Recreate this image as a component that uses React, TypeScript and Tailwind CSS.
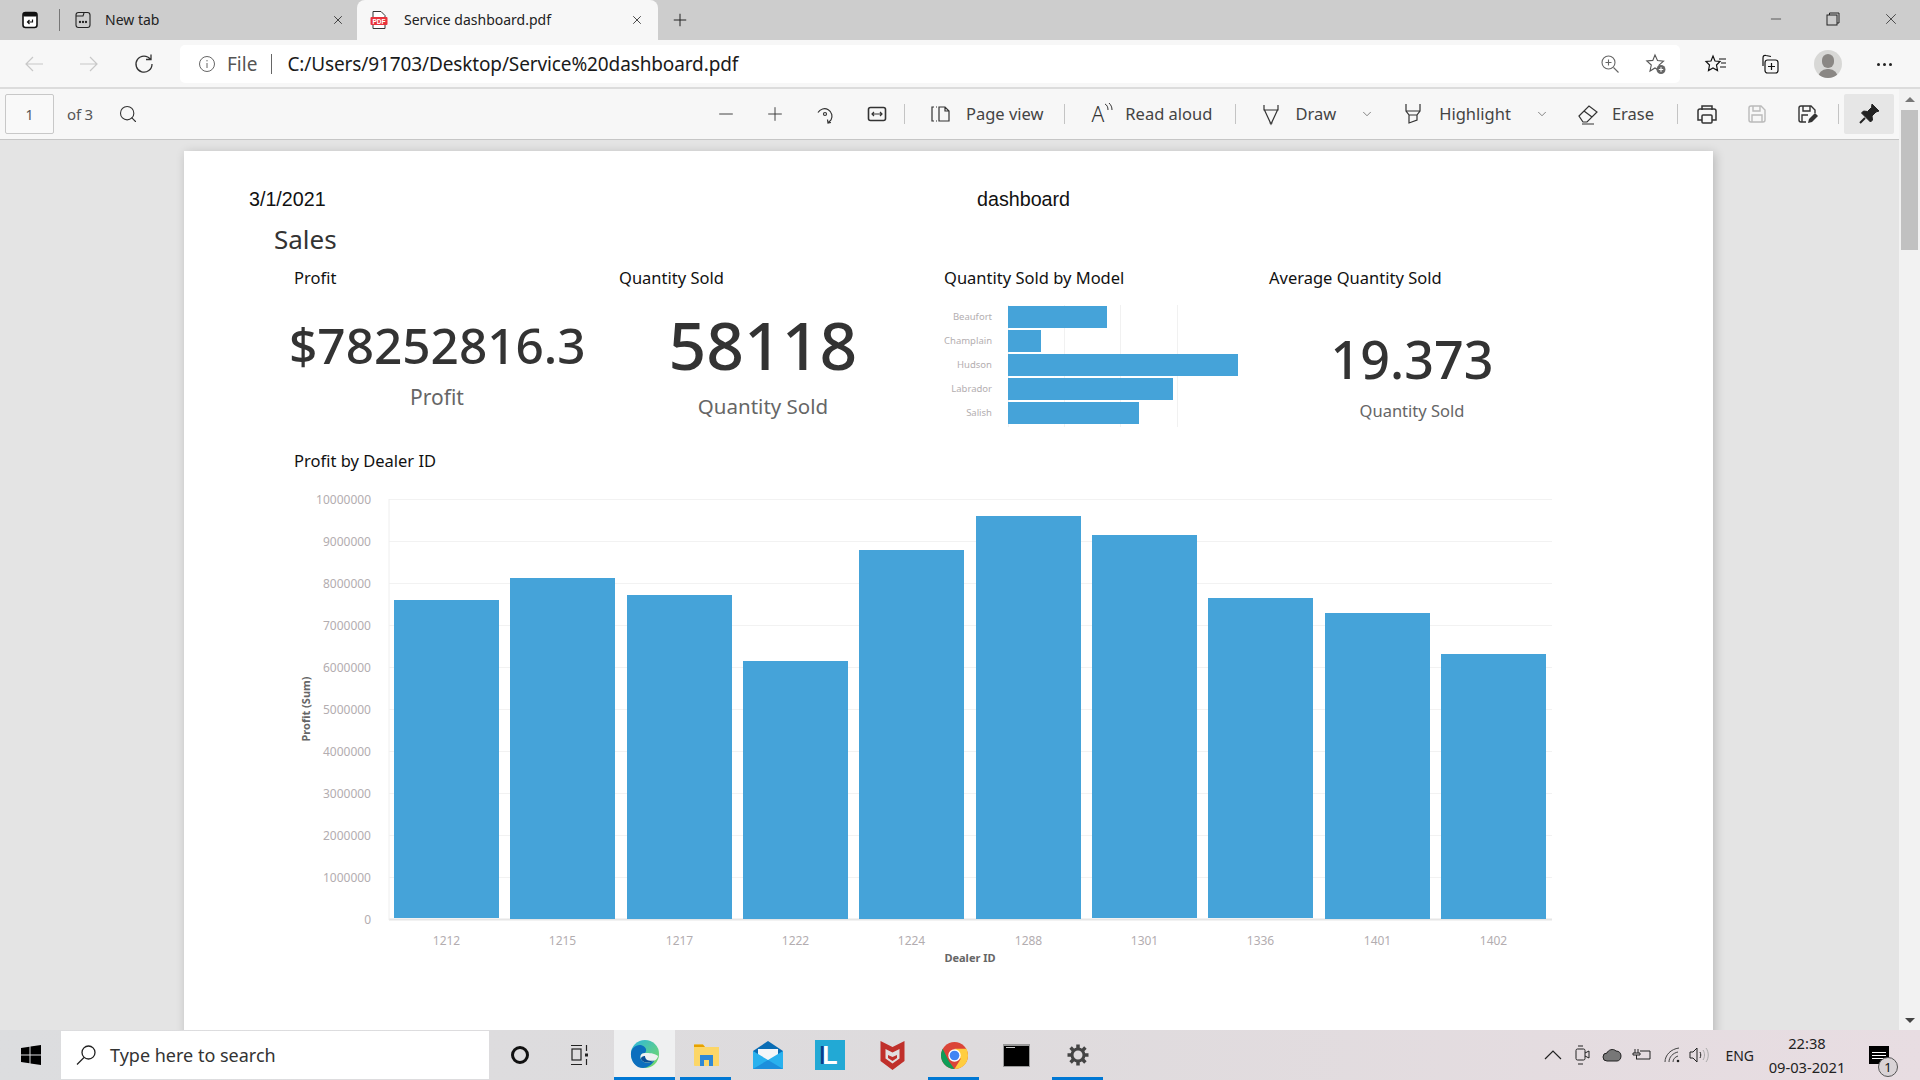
import { ChevronDown, Minus, Plus, Search, X } from "lucide-react";

const UI_FONT = "font-['Noto_Sans','Open_Sans',sans-serif]";
const DOC_FONT = "font-['Noto_Sans','Inter',sans-serif]";

const modelBars = [
  { name: "Beaufort", width: 99 },
  { name: "Champlain", width: 33 },
  { name: "Hudson", width: 230 },
  { name: "Labrador", width: 165 },
  { name: "Salish", width: 131 },
];

// x, top and bottom of every bar in the dealer chart, in chart coordinates
const dealerBars = [
  { id: "1212", x: 394, top: 600, bottom: 918 },
  { id: "1215", x: 510, top: 578, bottom: 919 },
  { id: "1217", x: 627, top: 595, bottom: 919 },
  { id: "1222", x: 743, top: 661, bottom: 919 },
  { id: "1224", x: 859, top: 550, bottom: 919 },
  { id: "1288", x: 976, top: 516, bottom: 919 },
  { id: "1301", x: 1092, top: 535, bottom: 918 },
  { id: "1336", x: 1208, top: 598, bottom: 918 },
  { id: "1401", x: 1325, top: 613, bottom: 919 },
  { id: "1402", x: 1441, top: 654, bottom: 919 },
];

const yTicks = [10000000, 9000000, 8000000, 7000000, 6000000, 5000000, 4000000, 3000000, 2000000, 1000000, 0];

function Divider() {
  return <div className="w-px h-[20px] bg-[#c4c4c4]" />;
}

function ToolIcon({ children }: { children: React.ReactNode }) {
  return (
    <svg width="24" height="24" viewBox="0 0 24 24" fill="none" stroke="#333" strokeWidth="1.2">
      {children}
    </svg>
  );
}

function TaskSlot({ active, children }: { active?: boolean; children: React.ReactNode }) {
  return (
    <div className="w-[62px] relative flex items-center justify-center">
      {children}
      {active && <div className="absolute bottom-0 left-[5px] w-[51px] h-[3px] bg-[#0078d4]" />}
    </div>
  );
}

function TabStrip() {
  return (
    <div className="h-[40px] bg-[#cdcdcd] flex items-stretch text-[14px] text-[#222] shrink-0">
      <div className="w-[59px] flex items-center pl-[20px]">
        <svg width="20" height="20" viewBox="0 0 20 20">
          <rect x="3" y="2.5" width="14" height="15" rx="2.5" fill="#fff" stroke="#111" strokeWidth="1.6" />
          <rect x="3" y="2.5" width="14" height="4" rx="1.5" fill="#111" />
          <path d="M12.500 9.500v2.500H7.500M9.500 10L7.500 12l2 2" fill="none" stroke="#111" strokeWidth="1.2" />
        </svg>
      </div>
      <div className="w-px h-[22px] bg-[#777] self-center" />
      <div className="w-[297px] flex items-center pl-[14px] pr-[12px]">
        <svg width="18" height="18" viewBox="0 0 18 18" fill="none" stroke="#222" strokeWidth="1.1">
          <rect x="2" y="1.500" width="14" height="15" rx="2.500" />
          <path d="M2 5h7l1-3" />
          <circle cx="6" cy="11" r=".6" fill="#222" />
          <circle cx="9" cy="11" r=".6" fill="#222" />
          <circle cx="12" cy="11" r=".6" fill="#222" />
        </svg>
        <span className="ml-[13px] flex-1 -mt-[1px]">New tab</span>
        <X size={14} strokeWidth={1.4} />
      </div>
      <div className="w-[301px] h-[40px] bg-[#f7f7f7] rounded-t-[8px] flex items-center pl-[12px] pr-[14px]">
        <svg width="20" height="20" viewBox="0 0 20 20">
          <path d="M4 1.500h8l4 4v13H4z" fill="#fff" stroke="#333" strokeWidth="1" />
          <rect x="1.500" y="7" width="17" height="8" rx="1" fill="#e8333c" />
          <text x="10" y="13.500" textAnchor="middle" fontSize="6.500" fontWeight="700" fill="#fff" fontFamily="Liberation Sans, sans-serif">PDF</text>
        </svg>
        <span className="ml-[15px] flex-1 -mt-[1px]">Service dashboard.pdf</span>
        <X size={14} strokeWidth={1.4} />
      </div>
      <div className="w-[44px] flex items-center justify-center">
        <Plus size={20} strokeWidth={1.2} />
      </div>
      <div className="flex-1" />
      <div className="flex items-center gap-[42px] pr-[20px] pb-[2px]">
        <Minus size={16} strokeWidth={1} />
        <svg width="14" height="14" viewBox="0 0 14 14" fill="none" stroke="#222">
          <rect x="1" y="3" width="10" height="10" />
          <path d="M3.500 3V1h9.500v10h-2" />
        </svg>
        <X size={18} strokeWidth={1} />
      </div>
    </div>
  );
}

function AddressBar() {
  return (
    <div className="h-[49px] pt-[1px] bg-[#f7f7f7] border-b-[2px] border-[#dcdcdc] flex items-center shrink-0">
      <div className="w-[180px] flex items-center pl-[23px] gap-[33px] text-[#c8c8c8]">
        <svg width="22" height="22" viewBox="0 0 22 22" fill="none" stroke="currentColor" strokeWidth="1.2">
          <path d="M20 11H3M10 4l-7 7 7 7" />
        </svg>
        <svg width="22" height="22" viewBox="0 0 22 22" fill="none" stroke="currentColor" strokeWidth="1.2">
          <path d="M2 11h17M12 4l7 7-7 7" />
        </svg>
        <svg width="22" height="22" viewBox="0 0 22 22" fill="none" stroke="#333" strokeWidth="1.3">
          <path d="M17.500 6.500A8 8 0 1 0 19 11M18 1.500v5h-5" />
        </svg>
      </div>
      <div className="w-[1500px] h-[38px] bg-white rounded-[5px] flex items-center pl-[17px] pr-[13px]">
        <svg width="20" height="20" viewBox="0 0 20 20" fill="none" stroke="#666" strokeWidth="1">
          <circle cx="10" cy="10" r="7.500" />
          <path d="M10 9v5M10 6v1.400" />
        </svg>
        <span className="ml-[10px] text-[19px] text-[#555]">File</span>
        <div className="w-px h-[20px] bg-[#666] ml-[14px]" />
        <span className="ml-[15px] text-[19px] text-[#1a1a1a] tracking-[-0.12px] flex-1">C:/Users/91703/Desktop/Service%20dashboard.pdf</span>
        <svg width="22" height="22" viewBox="0 0 22 22" fill="none" stroke="#666" strokeWidth="1.1" className="mr-[24px]">
          <circle cx="9.500" cy="9.500" r="6.500" />
          <path d="M14.500 14.500l5 5M9.500 6.500v6M6.500 9.500h6" />
        </svg>
        <svg width="22" height="22" viewBox="0 0 22 22" fill="none" stroke="#555" strokeWidth="1.1">
          <path d="M10 2l2.500 5.500 6 .6-4.500 4 1.300 6L10 15l-5 3 1.300-6-4.500-4 6-.6z" />
          <circle cx="16" cy="16.500" r="4.500" fill="#666" stroke="none" />
          <path d="M13.800 16.500h4.400M16 14.300v4.400" stroke="#fff" />
        </svg>
      </div>
      <div className="flex items-center">
        <svg width="24" height="24" viewBox="0 0 24 24" fill="none" stroke="#111" strokeWidth="1.2" className="ml-[24px]">
          <path d="M9 4l2 5 5 .5-3.500 3.500 1 5.500L9 16l-4.500 2.500 1-5.500L2 9.500 7 9zM15 7h7M17 11h5M16 15h6" />
        </svg>
        <svg width="24" height="24" viewBox="0 0 24 24" fill="none" stroke="#111" strokeWidth="1.2" className="ml-[29px]">
          <path d="M6 14V6c0-2 1-3 3-2.500l5 1" />
          <rect x="8" y="8" width="13" height="13" rx="2.500" />
          <path d="M14.500 11v7M11 14.500h7" />
        </svg>
        <div className="ml-[33px] w-[28px] h-[28px] rounded-full bg-[#d8d8d6] flex flex-col items-center justify-end overflow-hidden">
          <div className="w-[12px] h-[14px] rounded-full bg-[#8a8784] mb-[1px]" />
          <div className="w-[20px] h-[9px] rounded-t-full bg-[#8a8784]" />
        </div>
        <div className="flex gap-[3px] ml-[35px]">
          <div className="w-[3px] h-[3px] rounded-full bg-[#222]" />
          <div className="w-[3px] h-[3px] rounded-full bg-[#222]" />
          <div className="w-[3px] h-[3px] rounded-full bg-[#222]" />
        </div>
      </div>
    </div>
  );
}

function PdfToolbar() {
  return (
    <div className="h-[51px] bg-[#f7f7f7] border-b border-[#c6c6c6] flex items-center shrink-0 text-[#444] text-[16.500px]">
      <div className="ml-[5px] w-[49px] h-[40px] border border-[#c8c8c8] rounded-[2px] bg-[#f9f9f9] flex items-center justify-center text-[14px] text-[#555]">1</div>
      <span className="ml-[13px] text-[15px] text-[#555] tracking-[-0.2px]">of 3</span>
      <Search size={20} strokeWidth={1.3} className="ml-[25px] text-[#333]" />
      <div className="flex-1" />
      <Minus size={22} strokeWidth={1} className="text-[#333]" />
      <Plus size={22} strokeWidth={1} className="text-[#333] ml-[27px]" />
      <div className="ml-[27px]">
        <ToolIcon>
          <path d="M5 10.500a7.500 7.500 0 1 1 13 7.500l-3 3M14.500 17.500l.5 3.500 3-.5" />
          <circle cx="12" cy="12" r="1.500" />
        </ToolIcon>
      </div>
      <div className="ml-[28px]">
        <ToolIcon>
          <rect x="3.500" y="5.500" width="17" height="13" rx="2" strokeWidth="1.600" />
          <path d="M7 12h10M9 10l-2 2 2 2M15 10l2 2-2 2" />
        </ToolIcon>
      </div>
      <div className="ml-[15px]"><Divider /></div>
      <div className="ml-[23px]">
        <ToolIcon>
          <path d="M6 5h-2v14h2M8 5h1M8 19h1M11 5v14h10V9l-4-4zM17 5v4h4" />
        </ToolIcon>
      </div>
      <span className="ml-[14px]">Page view</span>
      <div className="ml-[20px]"><Divider /></div>
      <span className="ml-[27px] text-[21px] font-light leading-none text-[#333]">A</span>
      <svg width="10" height="12" viewBox="0 0 10 12" fill="none" stroke="#333" className="-mt-[10px]">
        <path d="M1 1c2 1 3 3 3 6M5 0c2 2 3 4 3 7" />
      </svg>
      <span className="ml-[11px]">Read aloud</span>
      <div className="ml-[23px]"><Divider /></div>
      <div className="ml-[23px]">
        <ToolIcon>
          <path d="M5 3v5h14V3M5 7l7 15 7-15M10.500 21h3" />
        </ToolIcon>
      </div>
      <span className="ml-[12px]">Draw</span>
      <ChevronDown size={14} strokeWidth={1.1} className="ml-[24px]" />
      <div className="ml-[27px]">
        <ToolIcon>
          <path d="M5 2v7l3 4v8l8-3v-5l3-4V2M5 9h14M8 13h8" />
        </ToolIcon>
      </div>
      <span className="ml-[14px]">Highlight</span>
      <ChevronDown size={14} strokeWidth={1.1} className="ml-[24px]" />
      <div className="ml-[27px]">
        <ToolIcon>
          <path d="M3 14l10-10 8 6-10 10H7zM8 9l8 6M6 22h12" />
        </ToolIcon>
      </div>
      <span className="ml-[12px]">Erase</span>
      <div className="ml-[23px]"><Divider /></div>
      <div className="ml-[17px]">
        <ToolIcon>
          <path d="M7 8V4h10v4M7 18H3V9c0-1 1-2 2-2h14c1 0 2 1 2 2v9h-4" strokeWidth="1.500" />
          <rect x="7" y="13" width="10" height="8" rx="1" strokeWidth="1.500" />
        </ToolIcon>
      </div>
      <div className="ml-[26px] opacity-30">
        <ToolIcon>
          <path d="M4 6c0-1 1-2 2-2h10l4 4v10c0 1-1 2-2 2H6c-1 0-2-1-2-2zM8 4v5h7V4M7 20v-7h10v7" strokeWidth="1.400" />
        </ToolIcon>
      </div>
      <div className="ml-[26px]">
        <ToolIcon>
          <path d="M11 20H6c-1 0-2-1-2-2V6c0-1 1-2 2-2h10l4 4v3M8 4v5h7V4M7 20v-7h6" strokeWidth="1.400" />
          <path d="M13 21l1-4 6-6 3 3-6 6z" fill="#333" stroke="none" />
        </ToolIcon>
      </div>
      <div className="ml-[19px]"><Divider /></div>
      <div className="ml-[5px] mr-[5px] w-[50px] h-[40px] rounded-[2px] bg-[#e6e6e6] flex items-center justify-center">
        <svg width="24" height="24" viewBox="0 0 24 24" fill="#222" stroke="#222">
          <path d="M15 2l7 7-3 1-4 4 .5 4-2 2-9-9 2-2 4 .5 4-4z" />
          <path d="M8 16l-5 5" strokeWidth="2" />
        </svg>
      </div>
    </div>
  );
}

function MetricTitle({ children, className }: { children: React.ReactNode; className: string }) {
  return <div className={`text-[16.500px] leading-[22px] text-[#111] ${className}`}>{children}</div>;
}

function PdfPage() {
  return (
    <div className={`w-[1529px] ml-[184px] mt-[11px] h-[1100px] bg-white shadow-[2px_2px_10px_rgba(0,0,0,0.2)] shrink-0 ${DOC_FONT}`}>
      <div className="flex pl-[65px] pt-[35px] font-['Liberation_Sans',sans-serif] text-[19.700px] leading-[26px] text-[#111]">
        <span className="w-[728px]">3/1/2021</span>
        <span>dashboard</span>
      </div>
      <div className="pl-[90px] mt-[9px] text-[26px] leading-[36px] text-[#333]">Sales</div>

      <div className="flex mt-[10px] pl-[110px]">
        <div className="w-[325px]">
          <MetricTitle className="">Profit</MetricTitle>
          <div className="w-[286px] text-center mt-[26px]">
            <div className="-ml-[5px] text-[49.500px] leading-[60px] font-medium text-[#333] whitespace-nowrap">$78252816.3</div>
            <div className="text-[21px] leading-[28px] text-[#666] mt-[8px]">Profit</div>
          </div>
        </div>
        <div className="w-[325px]">
          <MetricTitle className="">Quantity Sold</MetricTitle>
          <div className="w-[286px] text-center mt-[15px] ml-[1px]">
            <div className="text-[66px] leading-[80px] font-medium text-[#333]">58118</div>
            <div className="text-[20.500px] leading-[28px] text-[#666] mt-[8px]">Quantity Sold</div>
          </div>
        </div>
        <div className="w-[325px]">
          <MetricTitle className="">Quantity Sold by Model</MetricTitle>
          <div className="mt-[16px] pt-[1px] relative w-[300px] h-[122px]">
            {[64, 120, 176, 233].map((x) => (
              <div key={x} className="absolute top-0 bottom-0 w-px bg-[#f1f1f1]" style={{ left: x }} />
            ))}
            <div className="relative flex flex-col gap-[2px]">
              {modelBars.map((bar) => (
                <div key={bar.name} className="flex items-center h-[22px]">
                  <span className="w-[48px] text-right text-[9.500px] text-[#b3aeb0] whitespace-nowrap">{bar.name}</span>
                  <div className="ml-[16px] h-[22px] bg-[#45a3d9]" style={{ width: bar.width }} />
                </div>
              ))}
            </div>
          </div>
        </div>
        <div>
          <MetricTitle className="">Average Quantity Sold</MetricTitle>
          <div className="w-[286px] text-center mt-[40px]">
            <div className="text-[52px] leading-[60px] font-medium text-[#333]">19.373</div>
            <div className="text-[16.500px] leading-[24px] text-[#666] mt-[10px]">Quantity Sold</div>
          </div>
        </div>
      </div>

      <MetricTitle className="ml-[110px] mt-[23px]">Profit by Dealer ID</MetricTitle>

      <svg width="1529" height="500" viewBox="184 484 1529 500" className="block mt-[12px]" fontFamily="Noto Sans, sans-serif">
        {yTicks.map((tick, i) => (
          <g key={tick}>
            <line x1="389" x2="1552" y1={499.5 + i * 42} y2={499.5 + i * 42} stroke={i === 10 ? "#e6e6e6" : "#f2f2f2"} strokeWidth={i === 10 ? 2 : 1} />
            <text x="371" y={503.5 + i * 42} textAnchor="end" fontSize="12" fill="#b3adb0">{tick}</text>
          </g>
        ))}
        <line x1="389" x2="389" y1="499" y2="920" stroke="#eeeeee" />
        {dealerBars.map((bar) => (
          <g key={bar.id}>
            <rect x={bar.x} y={bar.top} width="105" height={bar.bottom - bar.top} fill="#45a3d9" />
            <text x={bar.x + 52.5} y="945" textAnchor="middle" fontSize="12" fill="#b3adb0">{bar.id}</text>
          </g>
        ))}
        <text x="970" y="962" textAnchor="middle" fontSize="11" fontWeight="700" fill="#666">Dealer ID</text>
        <text transform="translate(310 709) rotate(-90)" textAnchor="middle" fontSize="11" fontWeight="700" fill="#666">Profit (Sum)</text>
      </svg>
    </div>
  );
}

function Scrollbar() {
  return (
    <div className="w-[21px] bg-[#f2f2f2] flex flex-col items-center shrink-0 h-full">
      <div className="h-[21px] flex items-center justify-center">
        <div className="w-0 h-0 border-x-[5px] border-x-transparent border-b-[5px] border-b-[#777]" />
      </div>
      <div className="w-[17px] h-[140px] bg-[#c1c1c1]" />
      <div className="flex-1" />
      <div className="h-[20px] flex items-center justify-center">
        <div className="w-0 h-0 border-x-[5px] border-x-transparent border-t-[5px] border-t-[#444]" />
      </div>
    </div>
  );
}

function Taskbar() {
  return (
    <div className={`h-[50px] shrink-0 bg-gradient-to-r from-[#dcdddf] via-[#dedbdd] to-[#e8dde2] flex items-stretch ${UI_FONT}`}>
      <div className="w-[61px] flex items-center justify-center">
        <svg width="20" height="20" viewBox="0 0 20 20" fill="#000">
          <path d="M0 3l8.500-1.200V9.500H0zM9.500 1.600L20 0v9.500H9.500zM0 10.500h8.500v7.700L0 17zM9.500 10.500H20V20L9.500 18.400z" />
        </svg>
      </div>
      <div className="w-[428px] mt-[1px] mb-[1px] bg-white flex items-center pl-[14px]">
        <svg width="22" height="22" viewBox="0 0 22 22" fill="none" stroke="#222" strokeWidth="1.300">
          <circle cx="13.500" cy="8.500" r="6.500" />
          <path d="M9 13.500L2 20.500" />
        </svg>
        <span className="ml-[13px] text-[18px] text-[#333]">Type here to search</span>
      </div>
      <div className="w-[62px] flex items-center justify-center">
        <div className="w-[18px] h-[18px] rounded-full border-[3px] border-[#111]" />
      </div>
      <div className="w-[58px] flex items-center justify-center">
        <svg width="22" height="22" viewBox="0 0 22 22" fill="none" stroke="#222" strokeWidth="1.200">
          <path d="M2 1.500h11M2 20.500h11M17.500 1v6M17.500 15v6" />
          <rect x="3" y="5" width="9" height="11" />
          <rect x="16" y="9.500" width="3" height="3" fill="#222" stroke="none" />
        </svg>
      </div>
      <div className="ml-[5px] w-[61px] bg-[#eff0f1] border-b-[3px] border-[#0078d4] flex items-center justify-center">
        <svg width="30" height="30" viewBox="0 0 32 32">
          <defs>
            <linearGradient id="edgeTop" x1="0" y1="0" x2="1" y2="1">
              <stop offset="0" stopColor="#2bb6e0" />
              <stop offset="1" stopColor="#7cdc5e" />
            </linearGradient>
          </defs>
          <circle cx="16" cy="16" r="15" fill="url(#edgeTop)" />
          <path d="M1 16c0-7 7-11 12-9 5 2 5 6 3 8-4 0-6 3-4 7 3 4 9 4 14 1-3 5-8 8-12 8C6 31 1 24 1 16z" fill="#0c6fbe" />
          <path d="M12 22c-2-4 0-7 4-7 5 0 9 0 14 3-1 3-2 4-4 5-5 3-11 3-14-1z" fill="#eff0f1" />
          <path d="M12 22c3 4 9 4 14 1-6 1-10-1-10-5-2 0-5 1-4 4z" fill="#0a4f96" />
        </svg>
      </div>
      <TaskSlot active>
        <svg width="27" height="24" viewBox="0 0 27 24">
          <path d="M1 3c0-1 .5-1.500 1.500-1.500H10L12 4h14v19H2c-.5 0-1-.5-1-1z" fill="#fcd667" />
          <path d="M1 1.500h9L12 4H1z" fill="#e6a100" />
          <path d="M7 23V12h13v11h-4v-6h-5v6z" fill="#2f88d5" />
        </svg>
      </TaskSlot>
      <TaskSlot>
        <svg width="30" height="28" viewBox="0 0 30 28">
          <path d="M15 0L30 10v18H0V10z" fill="#0a6db5" />
          <path d="M5 8h20v7l-10 5-10-5z" fill="#f4f6f8" />
          <path d="M0 10l15 9 15-9v18H0z" fill="#29b1ee" />
          <path d="M15 19L30 28H0z" fill="#1c8fdc" />
        </svg>
      </TaskSlot>
      <TaskSlot>
        <div className="w-[30px] h-[30px] bg-[#22a9d5] flex items-center justify-center text-white font-bold text-[25px] leading-none font-['Liberation_Sans',sans-serif] [text-shadow:-3px_0_0_#0b3d8c]">L</div>
      </TaskSlot>
      <TaskSlot>
        <svg width="27" height="30" viewBox="0 0 24 30">
          <path d="M0 1l12 6 12-6v20l-12 9-12-9z" fill="#c0302b" />
          <path d="M5 9l7 3.500L19 9v9.500l-7 5-7-5z" fill="#e2dfe0" />
          <path d="M7.500 15l4.500 2 4.500-2v3l-4.500 3-4.500-3z" fill="#c0302b" />
        </svg>
      </TaskSlot>
      <TaskSlot active>
        <svg width="27" height="27" viewBox="0 0 24 24">
          <circle cx="12" cy="12" r="12" fill="#db4437" />
          <path d="M1.500 6L7 17l5 7C5 24 0 18 0 12c0-2 .5-4 1.500-6z" fill="#0f9d58" />
          <path d="M12 6h10.800c.8 2 1.200 4 1.200 6 0 7-5 12-12 12l5.500-9z" fill="#ffcd40" />
          <circle cx="12" cy="12" r="5.500" fill="#fff" />
          <circle cx="12" cy="12" r="4.300" fill="#4285f4" />
        </svg>
      </TaskSlot>
      <TaskSlot>
        <div className="w-[27px] h-[23px] bg-black border border-[#999] border-t-[2px] pl-[2px] pt-[1px]">
          <div className="w-[9px] h-px bg-[#ccc]" />
        </div>
      </TaskSlot>
      <TaskSlot active>
        <svg width="24" height="24" viewBox="0 0 24 24" fill="none" stroke="#444">
          <circle cx="12" cy="12" r="6" strokeWidth="3" />
          <path d="M12 1.500v4M12 18.500v4M1.500 12h4M18.500 12h4M4.600 4.600l2.800 2.800M16.600 16.600l2.800 2.800M4.600 19.400l2.800-2.800M16.600 7.400l2.800-2.800" strokeWidth="3.500" />
        </svg>
      </TaskSlot>
      <div className="flex-1" />
      <div className="flex items-center gap-[10px] text-[#222]">
        <svg width="18" height="12" viewBox="0 0 18 12" fill="none" stroke="#222" strokeWidth="1.200"><path d="M1 10l8-8 8 8" /></svg>
        <svg width="16" height="20" viewBox="0 0 16 20" fill="none" stroke="#222" className="ml-[3px]"><rect x="1" y="4" width="9" height="11" rx="1.500" /><path d="M10 8l4-2v7l-4-2M3 1h5M3 19h5" /></svg>
        <svg width="20" height="14" viewBox="0 0 20 14" fill="#777" stroke="#222" className="ml-[1px]"><path d="M5 13a4 4 0 0 1 0-8c1-3 6-5 9-2 3 0 5 2 5 5 0 3-2 5-4 5z" /></svg>
        <svg width="20" height="14" viewBox="0 0 20 14" fill="none" stroke="#222"><path d="M3 1v4M6 1v4M1 5h7v2H1zM4.500 7v4M8 3h10v8H4" /></svg>
        <svg width="18" height="16" viewBox="0 0 18 16" fill="none" stroke="#444" className="ml-[2px]"><path d="M1 15C1 8 7 2 15 1M5 15c0-5 4-9 9-10M9 15c0-3 2-5 5-6" /><circle cx="14" cy="14" r="1.300" fill="#222" stroke="none" /></svg>
        <svg width="20" height="16" viewBox="0 0 20 16" fill="none" stroke="#222" className="-ml-[3px]"><path d="M1 5h3l4-4v14l-4-4H1zM11 5c1 2 1 4 0 6" /><path d="M14 3c2 3 2 7 0 10M17 1c3 4 3 10 0 14" stroke="#aaa" /></svg>
        <span className="text-[14px] ml-[6px]">ENG</span>
        <div className="flex flex-col items-center text-[14.700px] leading-[24px] ml-[1px] w-[84px]">
          <span>22:38</span>
          <span>09-03-2021</span>
        </div>
        <div className="relative w-[20px] h-[18px] ml-[10px] bg-black flex flex-col justify-center gap-[2px] px-[3px] mr-[31px]">
          <div className="h-px bg-white" />
          <div className="h-px bg-white" />
          <div className="h-px bg-white" />
          <div className="absolute -right-[9px] -bottom-[13px] w-[20px] h-[20px] rounded-full bg-[#d9d3d6] border border-[#555] flex items-center justify-center text-[13px] text-[#111] leading-none">1</div>
        </div>
      </div>
    </div>
  );
}

export default function App() {
  return (
    <div className={`w-[1920px] h-[1080px] flex flex-col overflow-hidden ${UI_FONT}`}>
      <TabStrip />
      <AddressBar />
      <div className="flex-1 flex min-h-0">
        <div className="flex-1 flex flex-col min-w-0">
          <PdfToolbar />
          <div className="flex-1 bg-[#e4e4e4] overflow-hidden min-h-0">
            <PdfPage />
          </div>
        </div>
        <Scrollbar />
      </div>
      <Taskbar />
    </div>
  );
}
